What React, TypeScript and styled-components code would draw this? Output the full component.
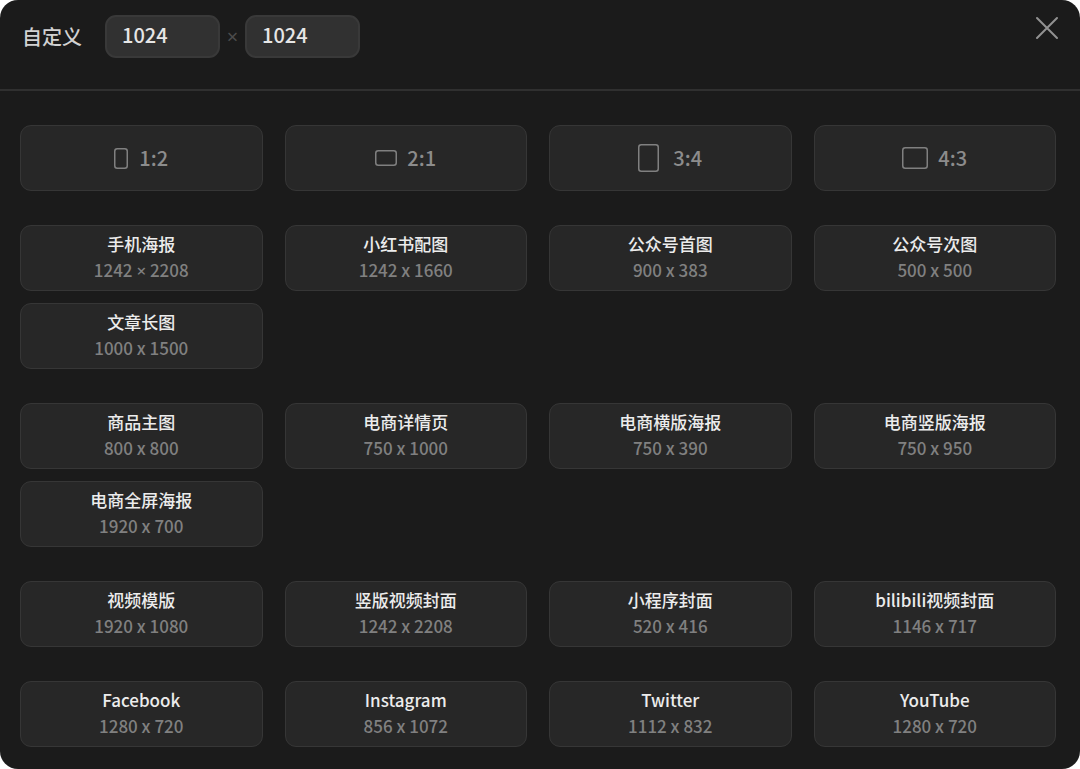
import React, { useState } from "react";
import styled, { createGlobalStyle } from "styled-components";

const GlobalStyle = createGlobalStyle`
  *, *::before, *::after { box-sizing: border-box; }
  body {
    margin: 0;
    background: #ffffff;
    font-family: "Noto Sans CJK SC", "Noto Sans", sans-serif;
  }
  button, input { font-family: inherit; }
`;

const Dialog = styled.main`
  display: flex;
  flex-direction: column;
  min-height: 100vh;
  border-radius: 18px;
  background: #1b1b1b;
  color: #e6e6e6;
`;

const Header = styled.header`
  display: flex;
  justify-content: space-between;
  align-items: flex-start;
  padding: 15px 20px 31px 22px;
  border-bottom: 2px solid #303030;
`;

const CustomSize = styled.form`
  display: flex;
  align-items: center;
`;

const CustomLabel = styled.label`
  margin-right: 23px;
  font-size: 20px;
  font-weight: 500;
  line-height: 30px;
  color: #d2d2d2;
`;

const SizeInput = styled.input`
  width: 115px;
  height: 43px;
  padding: 0 15px 4px;
  border: 2px solid #393939;
  border-radius: 11px;
  outline: none;
  background: #313131;
  color: #e6e6e6;
  font-size: 20px;
  font-weight: 500;

  &:focus { border-color: #5a5a5a; }
`;

const Times = styled.span`
  width: 25px;
  font-family: "Noto Sans", sans-serif;
  font-size: 20px;
  line-height: 24px;
  text-align: center;
  color: #4c4c4c;
`;

const CloseButton = styled.button`
  display: flex;
  padding: 0;
  border: 0;
  background: none;
  color: #929292;
  cursor: pointer;
`;

const Content = styled.div`
  display: flex;
  flex-direction: column;
  gap: 34px;
  padding: 34px 24px 20px 20px;
`;

const Group = styled.section`
  display: grid;
  grid-template-columns: repeat(4, minmax(0, 1fr));
  gap: 12px 22px;
`;

const Card = styled.button`
  display: flex;
  justify-content: center;
  align-items: center;
  min-height: 66px;
  padding: 0;
  border: 1px solid #363636;
  border-radius: 11px;
  background: #272727;
  cursor: pointer;

  &:hover { background: #2e2e2e; }
`;

const RatioCard = styled(Card)<{ $gap: number }>`
  gap: ${(p) => p.$gap}px;
  color: #8c8c8c;
  font-size: 20px;
  font-weight: 500;
  line-height: 30px;
`;

const PresetCard = styled(Card)`
  flex-direction: column;
  padding-bottom: 2px;
  font-size: 17px;
  font-weight: 500;
  line-height: 26px;
`;

const PresetName = styled.span`
  color: #ececec;
`;

const PresetSize = styled.span`
  color: #808080;
`;

const TimesSign = styled.span`
  font-family: "Noto Sans", sans-serif;
`;

const ratios = [
  { label: "1:2", width: 14, height: 21, gap: 11 },
  { label: "2:1", width: 22, height: 16, gap: 10 },
  { label: "3:4", width: 21, height: 28, gap: 14 },
  { label: "4:3", width: 26, height: 22, gap: 10 },
];

const presetGroups = [
  [
    ["手机海报", "1242 × 2208"],
    ["小红书配图", "1242 x 1660"],
    ["公众号首图", "900 x 383"],
    ["公众号次图", "500 x 500"],
    ["文章长图", "1000 x 1500"],
  ],
  [
    ["商品主图", "800 x 800"],
    ["电商详情页", "750 x 1000"],
    ["电商横版海报", "750 x 390"],
    ["电商竖版海报", "750 x 950"],
    ["电商全屏海报", "1920 x 700"],
  ],
  [
    ["视频模版", "1920 x 1080"],
    ["竖版视频封面", "1242 x 2208"],
    ["小程序封面", "520 x 416"],
    ["bilibili视频封面", "1146 x 717"],
  ],
  [
    ["Facebook", "1280 x 720"],
    ["Instagram", "856 x 1072"],
    ["Twitter", "1112 x 832"],
    ["YouTube", "1280 x 720"],
  ],
];

function RatioIcon({ width, height }: { width: number; height: number }) {
  return (
    <svg width={width} height={height} fill="none" stroke="#808080" strokeWidth="1.5" aria-hidden="true">
      <rect x="0.75" y="0.75" width={width - 1.5} height={height - 1.5} rx="2.5" />
    </svg>
  );
}

// The CJK face has a full-width multiplication sign; this keeps it narrow.
function SizeText({ size }: { size: string }) {
  const [before, after] = size.split("×");
  if (after === undefined) return <PresetSize>{size}</PresetSize>;
  return (
    <PresetSize>
      {before}
      <TimesSign>×</TimesSign>
      {after}
    </PresetSize>
  );
}

export default function App() {
  const [width, setWidth] = useState("1024");
  const [height, setHeight] = useState("1024");

  const applyPreset = (size: string) => {
    const [w, h] = size.split(/ [x×] /);
    setWidth(w);
    setHeight(h);
  };

  return (
    <>
      <GlobalStyle />
      <Dialog>
        <Header>
          <CustomSize onSubmit={(e) => e.preventDefault()}>
            <CustomLabel htmlFor="custom-width">自定义</CustomLabel>
            <SizeInput id="custom-width" value={width} onChange={(e) => setWidth(e.target.value)} />
            <Times>×</Times>
            <SizeInput aria-label="高度" value={height} onChange={(e) => setHeight(e.target.value)} />
          </CustomSize>
          <CloseButton type="button" aria-label="关闭">
            <svg width="26" height="26" viewBox="0 0 26 26" fill="none" stroke="currentColor" strokeWidth="2" strokeLinecap="round" aria-hidden="true">
              <path d="M3 3 23 23M23 3 3 23" />
            </svg>
          </CloseButton>
        </Header>
        <Content>
          <Group>
            {ratios.map((r) => (
              <RatioCard key={r.label} type="button" $gap={r.gap}>
                <RatioIcon width={r.width} height={r.height} />
                {r.label}
              </RatioCard>
            ))}
          </Group>
          {presetGroups.map((group) => (
            <Group key={group[0][0]}>
              {group.map(([name, size]) => (
                <PresetCard key={name} type="button" onClick={() => applyPreset(size)}>
                  <PresetName>{name}</PresetName>
                  <SizeText size={size} />
                </PresetCard>
              ))}
            </Group>
          ))}
        </Content>
      </Dialog>
    </>
  );
}
